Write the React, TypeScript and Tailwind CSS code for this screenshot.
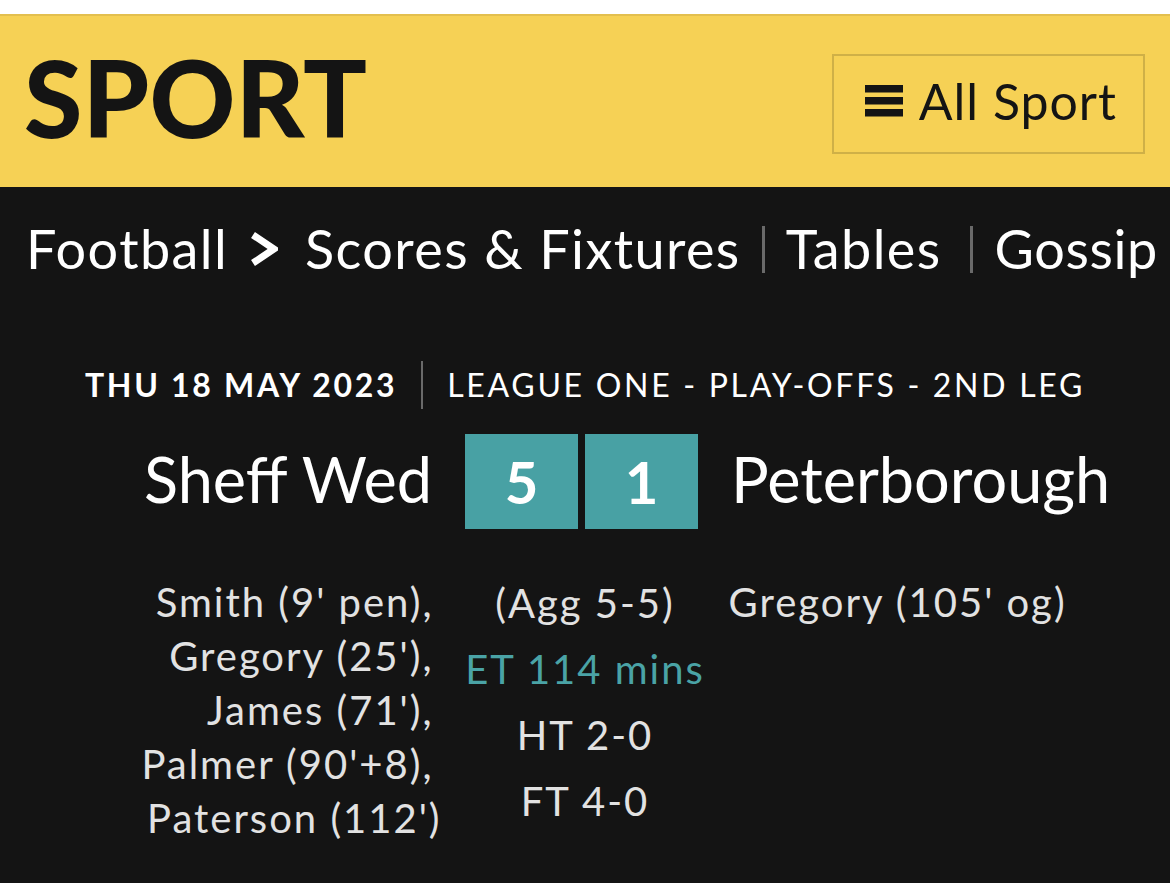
const scorers = [
  { text: "Smith (9' pen),", comma: true },
  { text: "Gregory (25'),", comma: true },
  { text: "James (71'),", comma: true },
  { text: "Palmer (90'+8),", comma: true },
  { text: "Paterson (112')", comma: false },
]

function Hamburger() {
  return (
    <svg width="38" height="32" viewBox="0 0 38 32" className="shrink-0">
      <rect x="0" y="0" width="38" height="7.5" fill="#141414" />
      <rect x="0" y="12" width="38" height="7.5" fill="#141414" />
      <rect x="0" y="24" width="38" height="7.5" fill="#141414" />
    </svg>
  )
}

function Chevron() {
  return (
    <svg width="28" height="34" viewBox="0 0 28 34" className="shrink-0">
      <polyline points="3,3 24,17 3,31" fill="none" stroke="#ffffff" strokeWidth="7" strokeLinejoin="miter" />
    </svg>
  )
}

export default function App() {
  return (
    <div
      className="w-[1170px] h-[883px] bg-[#141414] overflow-hidden text-white"
      style={{ fontFamily: "Lato, 'Open Sans', sans-serif" }}
    >
      <div className="h-[14px] bg-white" />
      <header className="h-[173px] bg-[#f6d155] border-t-2 border-[#e3bf4f] flex items-start justify-between pl-[24px] pr-[25px]">
        <h1 className="mt-[28px] text-[106px] leading-none font-black text-[#141414] tracking-[0.3px]">SPORT</h1>
        <button className="mt-[38px] h-[100px] border-2 border-[#cfb047] flex items-center gap-[16px] pl-[31px] pr-[26px] pb-[6px] text-[#141414]">
          <Hamburger />
          <span className="text-[50px] leading-none tracking-[1px]">All Sport</span>
        </button>
      </header>

      <nav className="mt-[35px] flex items-center pl-[26px] text-[54px] leading-none tracking-[1.4px] whitespace-nowrap">
        <span className="shrink-0">Football</span>
        <span className="shrink-0 ml-[22px] mr-[27px]"><Chevron /></span>
        <span className="shrink-0">Scores &amp; Fixtures</span>
        <span className="shrink-0 ml-[21px] mr-[21px] w-[3px] h-[47px] bg-[#6a6a6a]" />
        <span className="shrink-0">Tables</span>
        <span className="shrink-0 ml-[28px] mr-[22px] w-[3px] h-[47px] bg-[#6a6a6a]" />
        <span className="shrink-0 tracking-[0.6px]">Gossip</span>
      </nav>

      <div className="mt-[85px] flex items-center justify-center text-[32px] leading-none tracking-[2.7px] whitespace-nowrap">
        <span className="font-bold">THU 18 MAY 2023</span>
        <span className="mx-[24px] w-[2px] h-[48px] bg-[#6a6a6a]" />
        <span>LEAGUE ONE - PLAY-OFFS - 2ND LEG</span>
      </div>

      <div className="mt-[25px] grid grid-cols-[1fr_233px_1fr] items-center pr-[7px]">
        <div className="text-right pr-[33px] pb-[6px] text-[63px] leading-none">Sheff Wed</div>
        <div className="flex gap-[7px]">
          <div className="w-[113px] h-[95px] bg-[#48a1a4] flex items-center justify-center text-[58px] font-bold leading-none">5</div>
          <div className="w-[113px] h-[95px] bg-[#48a1a4] flex items-center justify-center text-[58px] font-bold leading-none">1</div>
        </div>
        <div className="pl-[33px] pb-[6px] text-[63px] leading-none">Peterborough</div>
      </div>

      <div className="mt-[46px] grid grid-cols-[1fr_287px_1fr] items-start text-[40px] text-[#e2e2e2] tracking-[2px] whitespace-nowrap">
        <div className="flex flex-col items-end leading-[54px]">
          {scorers.map((s) => (
            <span key={s.text} className={s.comma ? "pr-[8px]" : ""}>{s.text}</span>
          ))}
        </div>
        <div className="-mt-[5px] flex flex-col items-center leading-[66px]">
          <span>(Agg 5-5)</span>
          <span className="text-[#4aa3a6]">ET 114 mins</span>
          <span>HT 2-0</span>
          <span>FT 4-0</span>
        </div>
        <div className="leading-[54px]">Gregory (105' og)</div>
      </div>
    </div>
  )
}
